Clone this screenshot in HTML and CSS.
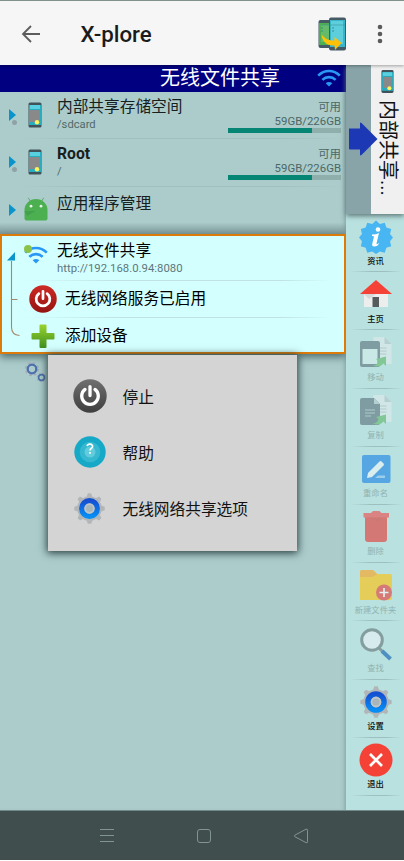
FILE: index.html
```
<!DOCTYPE html>
<html lang="zh-CN">
<head>
<meta charset="utf-8">
<title>X-plore</title>
<link rel="stylesheet" href="styles.css">
</head>
<body>
<svg class="defs" width="0" height="0" aria-hidden="true">
  <defs>
    <linearGradient id="blue" x1="0" y1="0" x2="0" y2="1"><stop offset="0" stop-color="#1450d2"/><stop offset="1" stop-color="#078df4"/></linearGradient>
    <linearGradient id="grey" x1="0" y1="0" x2="0" y2="1"><stop offset="0" stop-color="#707070"/><stop offset="1" stop-color="#3e3e3e"/></linearGradient>
    <linearGradient id="red" x1="0" y1="0" x2="0" y2="1"><stop offset="0" stop-color="#ce2a25"/><stop offset="1" stop-color="#951310"/></linearGradient>
    <linearGradient id="green" x1="0" y1="0" x2="0" y2="1"><stop offset="0" stop-color="#9bd32b"/><stop offset="1" stop-color="#3e8e20"/></linearGradient>
    <symbol id="phone" viewBox="0 0 14 26"><rect x=".5" y=".5" width="13" height="25" rx="1.6" fill="#40525a"/><path d="M1 3h12v20H1z" fill="#27adbf"/><path d="M2 3h10v4H2z" fill="#58d0df"/><path d="M2 8h10v12H2z" fill="#898989"/><circle cx="9" cy="20.3" r="2.2" fill="#fcf45c"/></symbol>
    <symbol id="wifi" viewBox="0 0 26 20"><g fill="none" stroke="#2997f5" stroke-width="2.900"><path d="M1.3 6.9C8 .2 18 .2 24.7 6.9"/><path d="M5.8 11.5c4.2-4 10.2-4 14.4 0"/></g><path d="M9.4 15.1c2.1-1.8 5.1-1.8 7.2 0L13 18.8z" fill="#2997f5"/></symbol>
    <symbol id="power" viewBox="0 0 34 34"><circle cx="17" cy="17" r="16.7"/><path d="M12 10.4a8.3 8.3 0 1 0 10 0M17 7.6v9" fill="none" stroke="#fff" stroke-width="3.3" stroke-linecap="round"/></symbol>
    <symbol id="gear" viewBox="0 0 32 32"><g fill="#b2b6b8"><circle cx="16" cy="16" r="12.7"/><path d="M13 4l1.300-3.700h3.400L19 4zM13 28l1.300 3.700h3.400L19 28z"/><path d="M13 4l1.300-3.700h3.400L19 4zM13 28l1.300 3.700h3.400L19 28z" transform="rotate(45 16 16)"/><path d="M13 4l1.300-3.700h3.400L19 4zM13 28l1.300 3.700h3.400L19 28z" transform="rotate(90 16 16)"/><path d="M13 4l1.300-3.700h3.400L19 4zM13 28l1.300 3.700h3.400L19 28z" transform="rotate(135 16 16)"/></g><circle cx="16" cy="16" r="8" fill="none" stroke="url(#blue)" stroke-width="5.600"/><circle cx="16" cy="16" r="4.500" fill="#a8b6bc" stroke="#bfc4c6" stroke-width="1.800"/></symbol>
    <symbol id="page" viewBox="0 0 18 27"><path d="M0 0h11l7 7v20H0z" fill="#e9edef"/><path d="M11 0v7h7z" fill="#b4c1c5"/><path d="M5 11h8M5 14h8M5 17h8" stroke="#a9b6ba"/></symbol>
    <symbol id="swoop" viewBox="0 0 14 10"><path d="M0 9c4 0 5-3 5.500-4.500L3 2.500 13 0v9.500L10.500 7C8 10 4 11 0 9z" fill="#4caf50"/></symbol>
  </defs>
</svg>
<div class="screen">
  <header class="appbar">
    <svg class="back" viewBox="0 0 20 18"><path d="M19 9H2M10 1L2 9l8 8" fill="none" stroke="#5c5c5c" stroke-width="1.800"/></svg>
    <h1>X-plore</h1>
    <svg class="transfer" viewBox="0 0 28 34"><rect x=".5" y="3" width="15" height="28" rx="2" fill="#455a64"/><path d="M1 6h14v22H1z" fill="#4caf50"/><path d="M3 8h10v17H3z" fill="#66bb6a"/><rect x="11" y=".5" width="17" height="33" rx="2" fill="#455a64"/><path d="M12 3h15v27H12z" fill="#38b5c8"/><path d="M13 4h12v23H13z" fill="#5dcfdc"/><path d="M3 8h9M12 8h15" stroke="#3a969c" stroke-width=".6"/><path d="M3 11h2M3 14h2M14 11h2M14 14h2" stroke="#31899a" stroke-width=".9"/><path d="M3.500 17.500c4 4.500 7 6 13 6V20l7 6-6.500 7-.5-4.500C8.500 29 4 24 3.500 17.500z" fill="#ffc107"/></svg>
    <svg class="more" viewBox="0 0 6 20"><g fill="#5b5b5b"><circle cx="3" cy="3" r="2.300"/><circle cx="3" cy="10" r="2.300"/><circle cx="3" cy="17" r="2.300"/></g></svg>
  </header>
  <main class="body">
    <section class="pane">
      <div class="pane-title"><span>无线文件共享</span><svg class="title-wifi"><use href="#wifi"/></svg></div>
      <div class="row">
        <div class="mark"><i class="tri"></i><i class="dot"></i></div>
        <svg class="phone"><use href="#phone"/></svg>
        <div class="names"><div class="name">内部共享存储空间</div><div class="path">/sdcard</div></div>
        <div class="usage"><span>可用</span><span>59GB/226GB</span><div class="bar"><div class="fill"></div></div></div>
      </div>
      <div class="row">
        <div class="mark"><i class="tri"></i><i class="dot"></i></div>
        <svg class="phone"><use href="#phone"/></svg>
        <div class="names"><div class="name bold">Root</div><div class="path">/</div></div>
        <div class="usage"><span>可用</span><span>59GB/226GB</span><div class="bar"><div class="fill"></div></div></div>
      </div>
      <div class="row apps">
        <div class="mark"><i class="tri"></i></div>
        <svg class="android" viewBox="0 0 24 24"><path d="M4.300.8l3 5M19.700.8l-3 5" stroke="#69a873" stroke-width="1"/><path d="M.5 13a11.500 11 0 0 1 23 0v8.500a2 2 0 0 1-2 2h-19a2 2 0 0 1-2-2z" fill="#4caf50"/><path d="M.5 14h11L3 19z" fill="#43a04c"/><circle cx="7" cy="9.200" r="1.400" fill="#e8f4e8"/><circle cx="17" cy="9.200" r="1.400" fill="#e8f4e8"/></svg>
        <div class="names"><div class="name">应用程序管理</div></div>
      </div>
      <div class="selected">
        <svg class="tree" viewBox="0 0 18 92"><path d="M5.500 9v66q0 8 8 8.500M5.500 47.500h6" fill="none" stroke="#a5876a" stroke-width="1.100"/><path d="M1 8.500L9 0v8.500z" fill="#0b94c9"/></svg>
        <div class="group">
          <div class="share"><div class="share-icon"><svg><use href="#wifi"/></svg><i></i></div><div><div class="name">无线文件共享</div><div class="path">http://192.168.0.94:8080</div></div></div>
          <div class="child"><svg class="child-icon" fill="url(#red)"><use href="#power"/></svg><div class="name">无线网络服务已启用</div></div>
          <div class="child last"><svg class="child-icon" viewBox="0 0 28 28"><path d="M10.500 3.500q0-1 1-1h5q1 0 1 1v7.500h7q1 0 1 1v4.500q0 1-1 1h-7v7.500q0 1-1 1h-5q-1 0-1-1v-7.500h-7q-1 0-1-1V12q0-1 1-1h7z" fill="url(#green)"/></svg><div class="name">添加设备</div></div>
        </div>
      </div>
      <svg class="cogs" viewBox="0 0 22 24"><g fill="none"><circle cx="7" cy="8" r="6.300" stroke="#a5acb8" stroke-width="1.700" stroke-dasharray="2.700 2.250"/><circle cx="7" cy="8" r="4.300" stroke="#4d6fac" stroke-width="2.300"/><circle cx="16.500" cy="16.500" r="4.200" stroke="#a5acb8" stroke-width="1.300" stroke-dasharray="1.800 1.500"/><circle cx="16.500" cy="16.500" r="2.900" stroke="#4d6fac" stroke-width="1.600"/></g></svg>
    </section>
    <aside class="side">
      <div class="tabs">
        <div class="gutter"><svg viewBox="0 0 30 34"><path d="M1 6.500h11V1.500q0-1.500 1.500-.5L29.500 17l-16 16q-1.500 1-1.500-.5v-5H2q-1 0-1-1z" fill="#1d38b5"/></svg></div>
        <div class="tab"><svg class="tab-phone"><use href="#phone"/></svg><span>内部共享...</span></div>
      </div>
      <nav class="tools">
        <div class="tool"><svg viewBox="0 0 32 32"><path d="M16-.5l3.800 3.400 5-1.200 1.500 4.900 4.900 1.500-1.200 5L33 16.500l-3 3.800 1.200 5-4.900 1.500-1.500 4.900-5-1.200L16 33l-3.800-2.500-5 1.200-1.500-4.900-4.900-1.500 1.200-5L-1 16.500l3-3.400-1.200-5 4.900-1.500 1.500-4.900 5 1.200z" fill="#48b6f3"/><circle cx="18" cy="8.500" r="2.300" fill="#fff"/><path d="M12 13.500q4.500 0 7-1.500l-2.500 10.500q-.3 1.500 2.800-.5-1.500 3.500-5.200 3.500-2.500 0-1.800-3l1.600-6.500q.2-1.500-1.900-1z" fill="#fff"/></svg><span>资讯</span></div>
        <div class="tool"><svg viewBox="0 0 32 32"><path d="M4 13L16 4l12 9v15H4z" fill="#eceeee"/><path d="M4 15h12L9 20z" fill="#d3dad9"/><path d="M0 15L16 1l16 14z" fill="#f44336"/><path d="M12.500 18h6.500v10h-6.500z" fill="#555b5d"/></svg><span>主页</span></div>
        <div class="tool off"><svg viewBox="0 0 32 32"><use href="#page" x="13" y="0" width="19" height="27"/><rect y="4" width="20" height="26" rx="2" fill="#455a64"/><path d="M2.500 12h15v15h-15z" fill="#dcefee"/><use href="#swoop" x="13" y="19" width="14" height="11"/></svg><span>移动</span></div>
        <div class="tool off"><svg viewBox="0 0 32 32"><use href="#page" x="13" y="0" width="19" height="27"/><path d="M0 5q0-2 2-2h12l6 6v19q0 2-2 2H2q-2 0-2-2z" fill="#455a64"/><path d="M14 3v6h6z" fill="#b3c0c4"/><path d="M5 15h10M5 18h10M5 21h6" stroke="#a5b3b8"/><use href="#swoop" x="13" y="19" width="14" height="11"/></svg><span>复制</span></div>
        <div class="tool off rename"><svg viewBox="0 0 32 32"><rect x="2" y="2" width="28.500" height="28" rx="2" fill="#2188e5"/><path d="M7 25l1-5L19.500 8.500q1-1 2 0l2 2q1 1 0 2L12 24z" fill="#eef5f7"/><path d="M15 25l3-2.500h7V25z" fill="#8cc4f2"/></svg><span>重命名</span></div>
        <div class="tool off trash"><svg viewBox="0 0 32 32"><path d="M5 6h22v22q0 3-3 3H8q-3 0-3-3z" fill="#e53935"/><path d="M3.500 2H11L13 0h6.500l2 2H29v4.500H3.500z" fill="#ef4a4b"/><path d="M8 6.500h15L19 11z" fill="#c53d3b" opacity=".4"/></svg><span>删除</span></div>
        <div class="tool off folder"><svg viewBox="0 0 32 32"><path d="M0 2q0-2 2-2h11l4 4h13q2 0 2 2v22q0 2-2 2H0z" fill="#ffc107"/><path d="M0 2q0-2 2-2h11l4 4q-3 3-5 3H0z" fill="#ffa21a"/><circle cx="24" cy="22.500" r="8" fill="#e83c38"/><path d="M24 18v9M19.500 22.500h9" stroke="#fff" stroke-width="1.600"/></svg><span>新建文件夹</span></div>
        <div class="tool off find"><svg viewBox="0 0 32 32"><path d="M19 20l5 5" stroke="#687c83" stroke-width="3"/><path d="M22 23l8.500 8" stroke="#1465b2" stroke-width="4"/><circle cx="12" cy="12" r="10.300" fill="#e8f1f8" stroke="#697b7d" stroke-width="3"/></svg><span>查找</span></div>
        <div class="tool"><svg><use href="#gear"/></svg><span>设置</span></div>
        <div class="tool exit"><svg viewBox="0 0 32 32"><circle cx="16" cy="16" r="16.500" fill="#f44336"/><path d="M10 10l12 12M22 10L10 22" stroke="#fff" stroke-width="2.700"/></svg><span>退出</span></div>
      </nav>
    </aside>
    <div class="menu">
      <div class="option"><svg fill="url(#grey)"><use href="#power"/></svg><span>停止</span></div>
      <div class="option"><svg viewBox="0 0 34 34"><circle cx="17" cy="17" r="15.700" fill="#16a8c7"/><circle cx="17" cy="17" r="10.300" fill="#35b8d0"/><circle cx="17" cy="17" r="5.500" fill="#62cbdc"/><path d="M14.200 11.200c.5-3 5.600-2.600 5.400.3-.1 1.800-2.600 2-2.600 4M17 17v1.700" fill="none" stroke="#fff" stroke-width="1.700"/></svg><span>帮助</span></div>
      <div class="option"><svg class="small"><use href="#gear"/></svg><span>无线网络共享选项</span></div>
    </div>
  </main>
  <footer class="navbar">
    <svg viewBox="0 0 16 16"><path d="M1 1.500h14M1 7.500h14M1 13.500h14"/></svg>
    <svg viewBox="0 0 16 16"><rect x="1.500" y="1.500" width="13" height="13" rx="2.500"/></svg>
    <svg viewBox="0 0 16 16"><path d="M1.800 7.200L13 1.200q1.500-.6 1.500 1v11.600q0 1.500-1.500.8L1.800 8.700q-1-.7 0-1.500z"/></svg>
  </footer>
</div>
</body>
</html>
```
FILE: styles.css
```
* { box-sizing: border-box; }
body { margin: 0; background: #fff; font-family: Roboto, "Noto Sans CJK SC", sans-serif; color: #15201f; }
svg { display: block; flex: none; overflow: visible; }
.defs { position: absolute; }
.screen { width: 404px; height: 861px; display: flex; flex-direction: column; overflow: hidden; }

.appbar { height: 65px; flex: none; display: flex; align-items: center; padding: 1px 21px 0; border-top: 1px solid #81918e; background: #f6f6f6; box-shadow: 0 1px 3px #0005; z-index: 2; }
.back { width: 20px; height: 18px; }
.appbar h1 { flex: 1; margin: 0 0 0 39.500px; font-size: 22.3px; line-height: 28px; font-weight: 500; color: #1b1b1b; }
.transfer { width: 28px; height: 34px; margin-right: 31px; }
.more { width: 6px; height: 20px; }

.body { position: relative; height: 745px; flex: none; display: flex; }
.pane { width: 346px; background: #abcccb; box-shadow: inset -4px 0 4px -3px #58777780; }
.pane-title { height: 27px; display: flex; align-items: center; justify-content: flex-end; gap: 37px; padding-right: 5px; background: #000080; color: #fff; font-size: 20px; line-height: 27px; }
.title-wifi { width: 24px; height: 19px; }

.row { height: 47.3px; display: flex; padding-left: 9px; background: linear-gradient(90deg, transparent 5%, #9fbfc0 25%, #9fbfc0 80%, transparent) bottom / 100% 1px no-repeat; }
.mark { width: 8px; margin-right: 12px; padding-top: 17px; }
.tri { display: block; border-left: 7px solid #0994cb; border-top: 6px solid transparent; border-bottom: 6px solid transparent; }
.dot { display: block; width: 5px; height: 5px; margin: -1px 0 0 3px; border-radius: 50%; background: #8fa2a4; }
.phone { width: 14px; height: 26px; margin: 10px 15px 0 -1px; }
.names { flex: 1; padding-top: 4px; }
.name { font-size: 15.7px; line-height: 22px; white-space: nowrap; }
.bold { font-weight: 700; font-size: 15.7px; }
.path { font-size: 11.2px; line-height: 14px; color: #526967; white-space: nowrap; }
.usage { width: 113px; margin-right: 5px; padding-top: 9px; display: flex; flex-direction: column; align-items: flex-end; font-size: 11.4px; line-height: 13.500px; color: #4c6766; }
.bar { width: 113px; height: 5px; background: #8eafab; }
.fill { width: 74%; height: 5px; background: #058674; }
.apps { height: 47.4px; background: linear-gradient(transparent 75%, #7e9999); }
.android { width: 24px; height: 24px; margin: 10.500px 9px 0 -5px; }
.apps .names { padding-top: 6px; }

.selected { height: 120.500px; display: flex; border: 2px solid #dc7a0a; background: #d4ffff; color: #000; box-shadow: 0 3px 8px #4c6868; padding-left: 4px; }
.tree { width: 18px; height: 92px; margin-top: 16px; }
.group { flex: 1; }
.share { height: 44.500px; display: flex; gap: 9px; padding-top: 4px; }
.share-icon { position: relative; width: 24px; margin-top: 6px; }
.share-icon svg { width: 24px; height: 19px; }
.share-icon i { position: absolute; left: 0; top: -1px; width: 8px; height: 8px; border-radius: 50%; background: #8bc34a; }
.share .path { line-height: 13px; font-size: 11.35px; color: #60777a; }
.child { height: 37px; display: flex; align-items: center; gap: 8px; padding: 1px 0 0 5px; background: linear-gradient(90deg, transparent, #bfe2e2 30%, #bfe2e2 80%, transparent 96%) top / 100% 1px no-repeat; }
.child-icon { width: 28px; height: 28px; }
.child-icon use { transform: scale(1); }
.cogs { width: 22px; height: 24px; margin: 7px 0 0 25px; }

.side { width: 58px; display: flex; flex-direction: column; }
.tabs { height: 149px; display: flex; box-shadow: 0 2px 5px #5b7676; z-index: 1; }
.gutter { width: 25px; background: #89a4a8; padding: 57px 0 0 2px; }
.gutter svg { position: relative; z-index: 2; width: 30px; height: 34px; }
.tab { width: 33px; background: #f0f0f0; display: flex; flex-direction: column; align-items: center; padding-top: 4px; }
.tab-phone { width: 13px; height: 25px; }
.tab span { margin-top: 6px; writing-mode: vertical-rl; text-orientation: sideways; font-size: 20px; line-height: 24px; white-space: nowrap; color: #111; }
.tools { flex: 1; background: #b9e1df; padding: 0 0 0 1px; }
.tool { height: 58.2px; display: flex; flex-direction: column; align-items: center; padding-top: 6.500px; background: linear-gradient(90deg, transparent, #9dbfc0 40%, #9dbfc0 70%, transparent) bottom / 52px 1px no-repeat; }
.tool svg { width: 32px; height: 32px; }
.tool span { margin-top: 1px; font-size: 8.300px; line-height: 14px; font-weight: 500; white-space: nowrap; color: #07100f; }
.off svg { opacity: .5; }
.off span { color: #91b2b0; font-weight: 400; }
.rename svg, .find svg { opacity: .65; }
.trash svg, .folder svg { opacity: .62; }

.menu { position: absolute; left: 48px; top: 290px; width: 248.500px; height: 196px; padding: 13px 24.500px; background: #d4d4d4; box-shadow: 0 1px 8px 1px #253b3b; z-index: 3; }
.option { height: 56.3px; display: flex; align-items: center; gap: 16px; font-size: 15.7px; color: #111; }
.option svg { width: 34px; height: 34px; }
.option .small { width: 31px; height: 31px; margin: 0 1.500px; }

.navbar { height: 50px; flex: none; display: flex; align-items: center; justify-content: center; gap: 81px; padding-left: 3px; background: #404e4d; border-top: 1px solid #718988; }
.navbar svg { width: 16px; height: 16px; fill: none; stroke: #829493; stroke-width: 1; }
```
